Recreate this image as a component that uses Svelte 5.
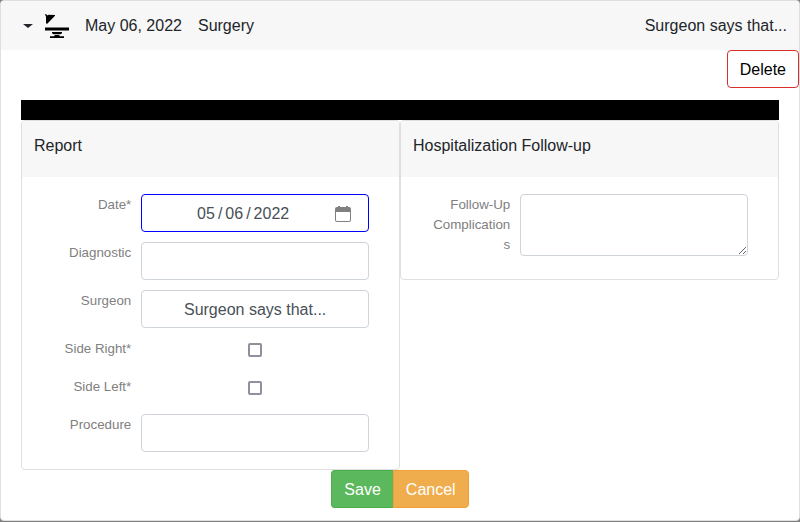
<script>
  let open = $state(true);
  let report = $state({
    date: '2022-05-06',
    diagnostic: '',
    surgeon: 'Surgeon says that...',
    right: false,
    left: false,
    procedure: ''
  });
  let complications = $state('');
</script>

<section class="event">
  <button class="summary" type="button" aria-expanded={open} onclick={() => (open = !open)}>
    <span class="caret"></span>
    <svg class="surgery" viewBox="0 0 24 24" width="24" height="24" aria-hidden="true">
      <path d="M0 0.4 L0.8 0 L2.6 1.6 L3.4 0.8 L10 1 L10 1.8 L2 10 L1 9 L1 2.6 Z" />
      <path d="M0 13.5h24v3H0z M7 18h10v1.3l-1.5 1H8.5L7 19.3z M10 21h4l1 1.2h4V24H5v-1.8h4z" />
    </svg>
    <span>May 06, 2022</span>
    <span class="kind">Surgery</span>
    <span class="note">Surgeon says that...</span>
  </button>

  {#if open}
    <div class="tools"><button class="btn delete" type="button">Delete</button></div>
    <form onsubmit={(e) => e.preventDefault()}>
      <div class="bar"></div>
      <div class="cards">
        <section class="card">
          <h2>Report</h2>
          <div class="fields">
            <div class="row">
              <label for="date">Date*</label>
              <input class="control date" id="date" type="date" bind:value={report.date} />
            </div>
            <div class="row">
              <label for="diagnostic">Diagnostic</label>
              <input class="control" id="diagnostic" type="text" bind:value={report.diagnostic} />
            </div>
            <div class="row">
              <label for="surgeon">Surgeon</label>
              <input class="control" id="surgeon" type="text" bind:value={report.surgeon} />
            </div>
            <div class="row check">
              <label for="right">Side Right*</label>
              <input id="right" type="checkbox" bind:checked={report.right} />
            </div>
            <div class="row check">
              <label for="left">Side Left*</label>
              <input id="left" type="checkbox" bind:checked={report.left} />
            </div>
            <div class="row">
              <label for="procedure">Procedure</label>
              <input class="control" id="procedure" type="text" bind:value={report.procedure} />
            </div>
          </div>
        </section>
        <section class="card">
          <h2>Hospitalization Follow-up</h2>
          <div class="fields">
            <div class="row">
              <label for="complications">Follow-Up Complications</label>
              <textarea class="control" id="complications" rows="2" bind:value={complications}></textarea>
            </div>
          </div>
        </section>
      </div>
      <div class="actions">
        <button class="btn save" type="submit">Save</button>
        <button class="btn cancel" type="button">Cancel</button>
      </div>
    </form>
  {/if}
</section>

<style>
  :global(body) {
    margin: 0;
    background: #808080;
    color: #212529;
    font: 16px/24px "Liberation Sans", Arial, sans-serif;
  }
  .event {
    background: #fff;
    border: 1px solid #dfdfdf;
    border-radius: 4px;
  }
  button, input, textarea {
    box-sizing: border-box;
    margin: 0;
    font: inherit;
  }
  .summary {
    display: flex;
    align-items: center;
    width: 100%;
    padding: 13px 12px 12px 22px;
    border: 0;
    border-radius: 3px 3px 0 0;
    background: #f7f7f7;
    color: #212529;
    text-align: left;
  }
  .caret {
    margin-right: 12px;
    border: 5px solid transparent;
    border-top: 4px solid #212529;
    border-bottom: 0;
  }
  .surgery {
    margin-right: 16px;
  }
  .kind {
    margin-left: 16px;
  }
  .note {
    margin-left: auto;
  }
  .tools {
    display: flex;
    justify-content: flex-end;
  }
  .btn {
    padding: 7px 12px 5px;
    border: 1px solid;
    border-radius: 4px;
  }
  .delete {
    border-color: #d9302c;
    background: #fff;
    color: #000;
  }
  form {
    padding: 12px 20px;
  }
  .bar {
    height: 20px;
    background: #000;
  }
  .cards {
    display: grid;
    grid-template-columns: 1fr 1fr;
    align-items: start;
  }
  .card {
    border: 1px solid #dfdfdf;
    border-radius: 4px;
  }
  h2 {
    margin: 0;
    padding: 13px 12px 19px;
    border-radius: 3px 3px 0 0;
    background: #f7f7f7;
    font: inherit;
  }
  .fields {
    display: grid;
    gap: 10px;
    padding: 17px 30px;
  }
  .row {
    display: grid;
    grid-template-columns: 25% minmax(0, 1fr);
    column-gap: 10px;
    align-items: start;
  }
  label {
    padding-top: 1px;
    color: #808080;
    font-size: smaller;
    line-height: 20px;
    text-align: right;
    overflow-wrap: anywhere;
  }
  .control {
    display: block;
    width: 100%;
    height: 38px;
    padding: 7px 12px 5px;
    border: 1px solid #ced4da;
    border-radius: 4px;
    background: #fff;
    color: #495057;
    text-align: center;
  }
  textarea.control {
    height: 62px;
    margin-bottom: 6px;
    resize: vertical;
  }
  .date {
    border-color: #0000ff;
  }
  .date::-webkit-datetime-edit {
    text-align: center;
  }
  .date::-webkit-datetime-edit-text {
    padding: 0 2px;
  }
  .date::-webkit-calendar-picker-indicator {
    width: 16px;
    height: 16px;
    margin: 0 5px 0 3px;
    padding: 0;
    background: url("data:image/svg+xml,%3Csvg xmlns='http://www.w3.org/2000/svg' viewBox='0 0 16 16'%3E%3Cpath fill='%23808080' fill-rule='evenodd' d='M3 0h2v1h6V0h2v1h1a2 2 0 0 1 2 2v11a2 2 0 0 1-2 2H2a2 2 0 0 1-2-2V3a2 2 0 0 1 2-2h1z M1 6v8q0 1 1 1h12q1 0 1-1V6z'/%3E%3C/svg%3E") center / 16px 16px no-repeat;
  }
  .check {
    height: 28px;
  }
  .check input {
    appearance: none;
    justify-self: center;
    width: 14px;
    height: 14px;
    margin-top: 5px;
    border: 2px solid #8f8f9d;
    border-radius: 2px;
    background: #fff;
  }
  .check input:checked {
    background: #0060df;
  }
  .actions {
    display: flex;
    justify-content: center;
  }
  .save {
    border-color: #4cae4c;
    border-right: 0;
    border-radius: 4px 0 0 4px;
    background: #5cb85c;
    color: #fff;
  }
  .cancel {
    border-color: #f0a030;
    border-radius: 0 4px 4px 0;
    background: #f0ad4e;
    color: #fff;
  }
</style>
